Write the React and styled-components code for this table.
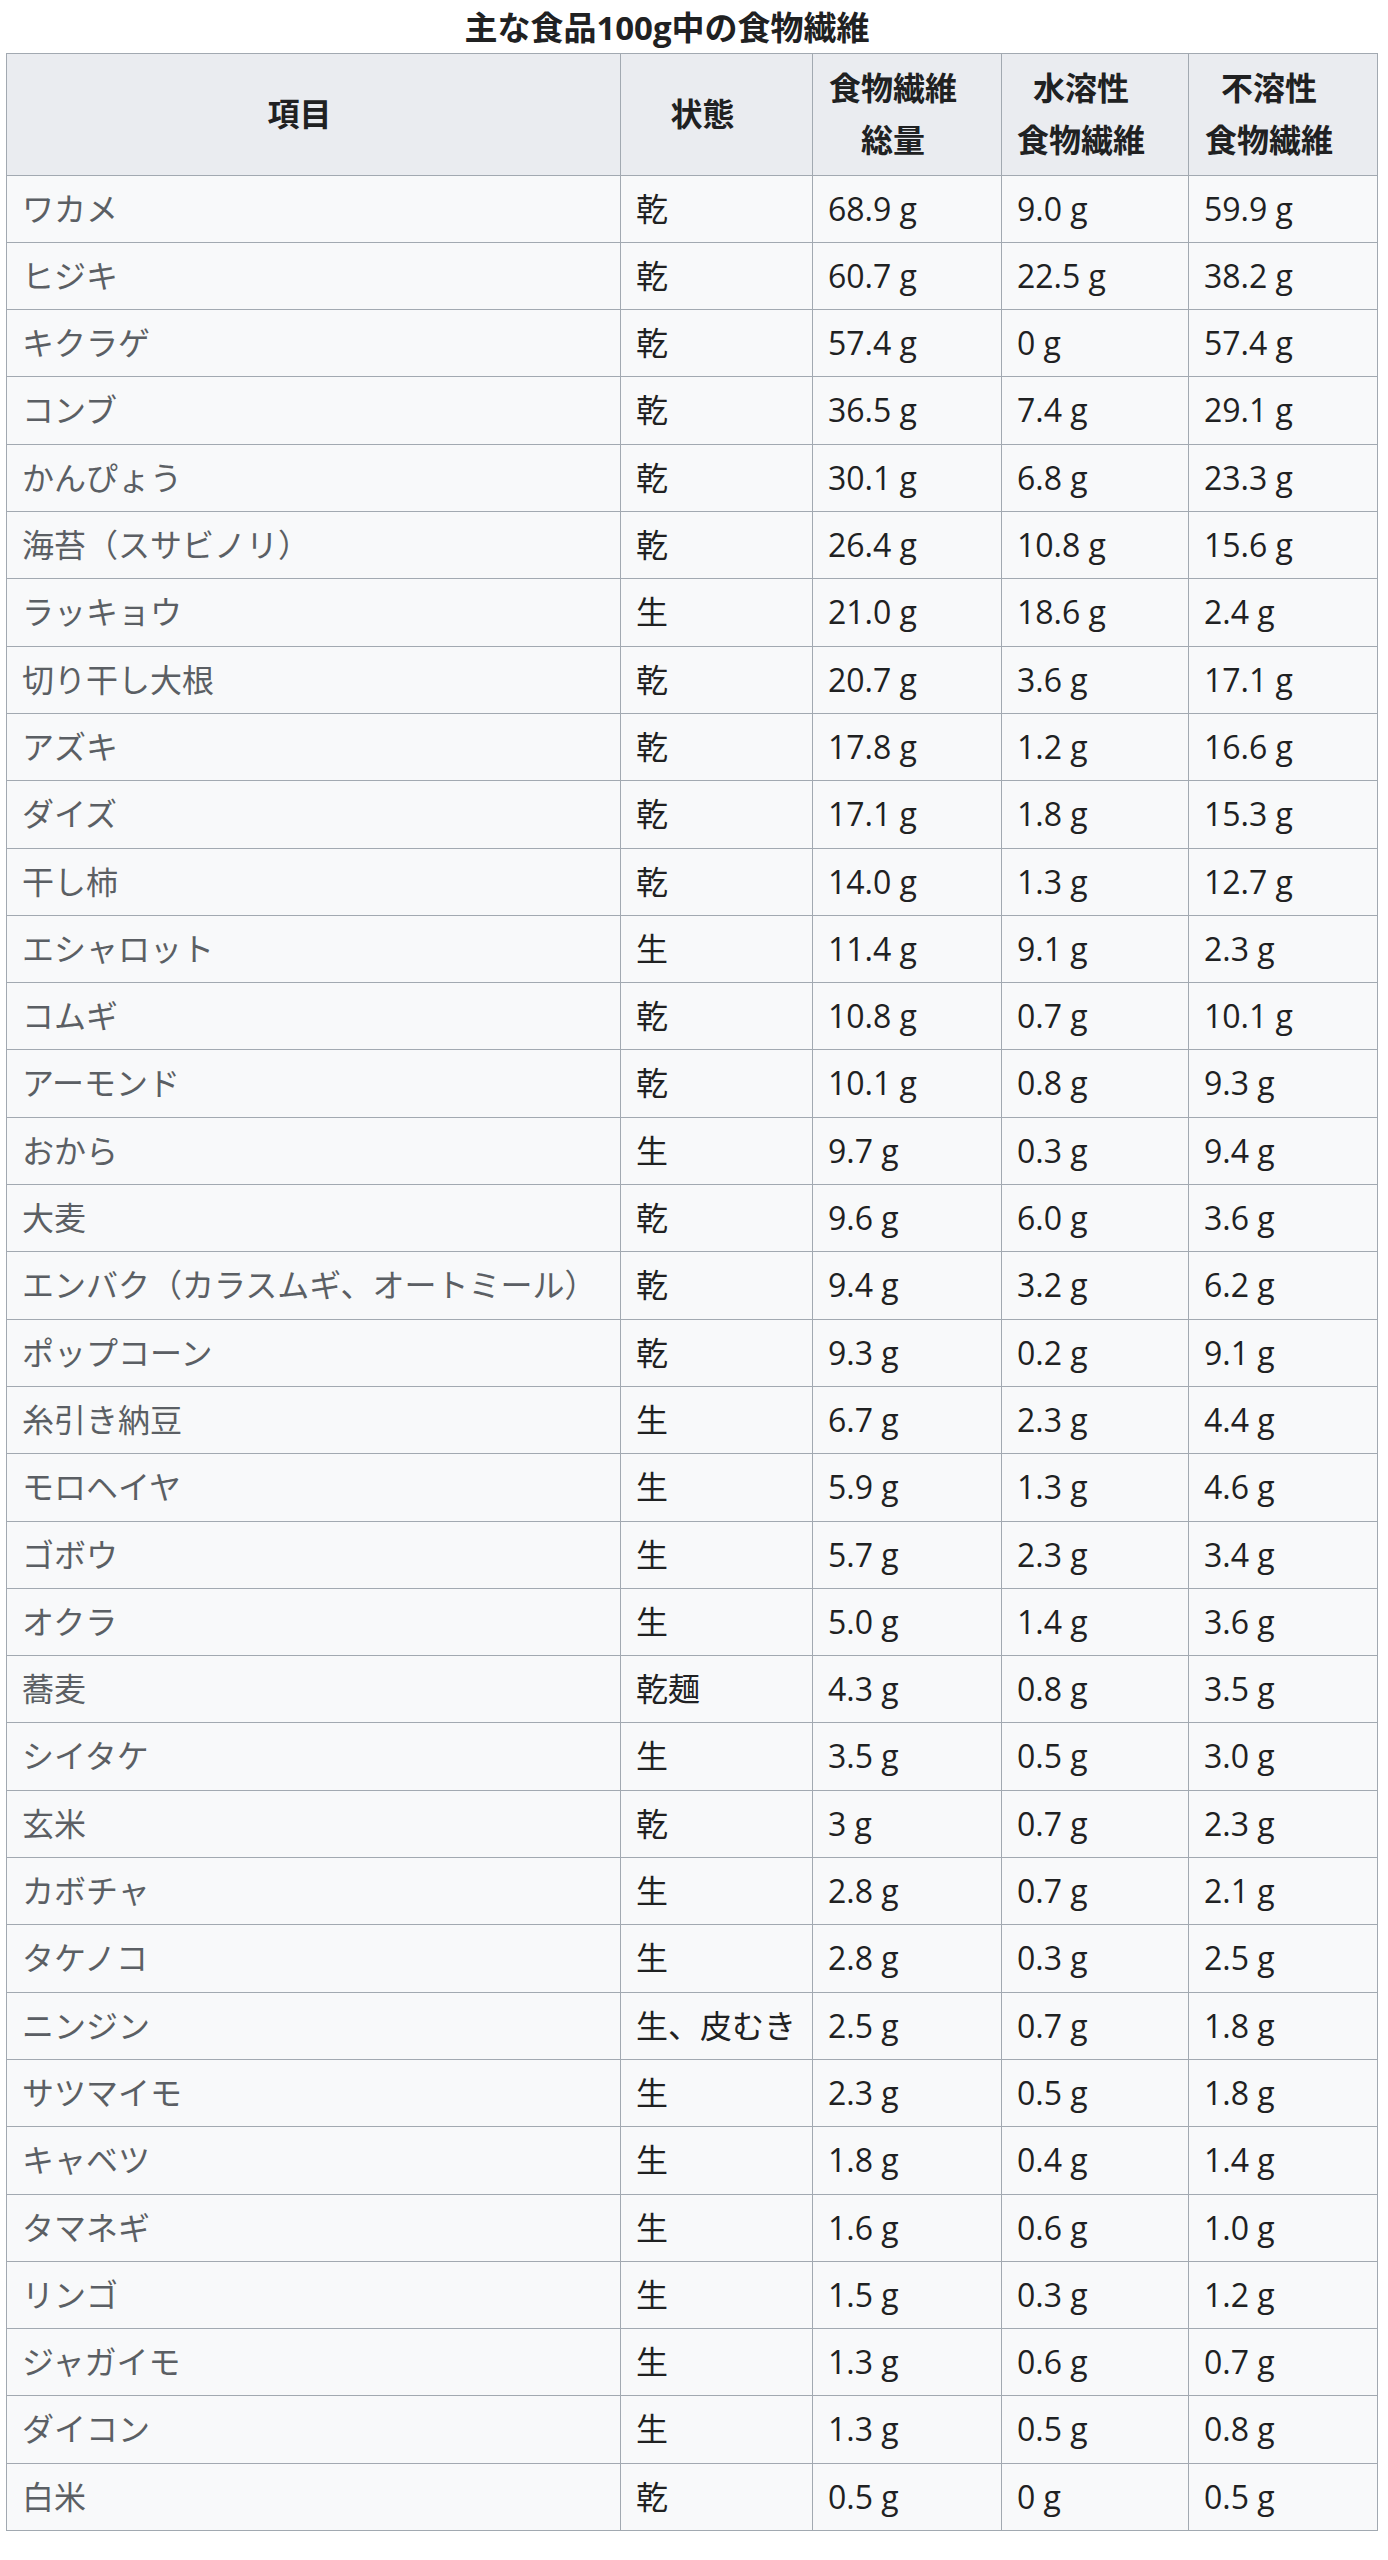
import React from 'react'
import styled, { createGlobalStyle } from 'styled-components'

const GlobalStyle = createGlobalStyle`
  body {
    margin: 0;
    background: #ffffff;
    font-family: "Open Sans", "Noto Sans CJK JP", sans-serif;
    color: #202122;
  }
`

const Page = styled.div`
  padding: 2px 0 0 6px;
`

const Table = styled.table`
  width: 1371px;
  table-layout: fixed;
  border-collapse: collapse;
  background: #f8f9fa;
  border: 1px solid #a2a9b1;
  font-size: 32px;
  line-height: 52.3px;
`

const Caption = styled.caption`
  font-size: 33px;
  font-weight: 700;
  line-height: 51px;
  padding-right: 50px;
  text-align: center;
  color: #202122;
`

const HeadCell = styled.th`
  background: #eaecf0;
  border: 1px solid #a2a9b1;
  padding: 8px 43px 8px 15px;
  font-weight: 700;
  text-align: center;
  vertical-align: middle;
  color: #202122;
`

const Cell = styled.td`
  border: 1px solid #a2a9b1;
  padding: 7px 15px;
  white-space: nowrap;
  overflow: hidden;
  color: ${({ $muted }) => ($muted ? '#5b5f64' : '#202122')};
`

const rows = [
  ['ワカメ', '乾', '68.9', '9.0', '59.9'],
  ['ヒジキ', '乾', '60.7', '22.5', '38.2'],
  ['キクラゲ', '乾', '57.4', '0', '57.4'],
  ['コンブ', '乾', '36.5', '7.4', '29.1'],
  ['かんぴょう', '乾', '30.1', '6.8', '23.3'],
  ['海苔（スサビノリ）', '乾', '26.4', '10.8', '15.6'],
  ['ラッキョウ', '生', '21.0', '18.6', '2.4'],
  ['切り干し大根', '乾', '20.7', '3.6', '17.1'],
  ['アズキ', '乾', '17.8', '1.2', '16.6'],
  ['ダイズ', '乾', '17.1', '1.8', '15.3'],
  ['干し柿', '乾', '14.0', '1.3', '12.7'],
  ['エシャロット', '生', '11.4', '9.1', '2.3'],
  ['コムギ', '乾', '10.8', '0.7', '10.1'],
  ['アーモンド', '乾', '10.1', '0.8', '9.3'],
  ['おから', '生', '9.7', '0.3', '9.4'],
  ['大麦', '乾', '9.6', '6.0', '3.6'],
  ['エンバク（カラスムギ、オートミール）', '乾', '9.4', '3.2', '6.2'],
  ['ポップコーン', '乾', '9.3', '0.2', '9.1'],
  ['糸引き納豆', '生', '6.7', '2.3', '4.4'],
  ['モロヘイヤ', '生', '5.9', '1.3', '4.6'],
  ['ゴボウ', '生', '5.7', '2.3', '3.4'],
  ['オクラ', '生', '5.0', '1.4', '3.6'],
  ['蕎麦', '乾麺', '4.3', '0.8', '3.5'],
  ['シイタケ', '生', '3.5', '0.5', '3.0'],
  ['玄米', '乾', '3', '0.7', '2.3'],
  ['カボチャ', '生', '2.8', '0.7', '2.1'],
  ['タケノコ', '生', '2.8', '0.3', '2.5'],
  ['ニンジン', '生、皮むき', '2.5', '0.7', '1.8'],
  ['サツマイモ', '生', '2.3', '0.5', '1.8'],
  ['キャベツ', '生', '1.8', '0.4', '1.4'],
  ['タマネギ', '生', '1.6', '0.6', '1.0'],
  ['リンゴ', '生', '1.5', '0.3', '1.2'],
  ['ジャガイモ', '生', '1.3', '0.6', '0.7'],
  ['ダイコン', '生', '1.3', '0.5', '0.8'],
  ['白米', '乾', '0.5', '0', '0.5'],
]

const widths = [614, 192, 189, 187, 189]

export default function App() {
  return (
    <>
      <GlobalStyle />
      <Page>
        <Table>
          <Caption>主な食品100g中の食物繊維</Caption>
          <colgroup>
            {widths.map((w, i) => (
              <col key={i} style={{ width: w }} />
            ))}
          </colgroup>
          <thead>
            <tr>
              <HeadCell>項目</HeadCell>
              <HeadCell>状態</HeadCell>
              <HeadCell>食物繊維<br />総量</HeadCell>
              <HeadCell>水溶性<br />食物繊維</HeadCell>
              <HeadCell>不溶性<br />食物繊維</HeadCell>
            </tr>
          </thead>
          <tbody>
            {rows.map(([name, state, total, soluble, insoluble]) => (
              <tr key={name}>
                <Cell $muted>{name}</Cell>
                <Cell>{state}</Cell>
                <Cell>{total} g</Cell>
                <Cell>{soluble} g</Cell>
                <Cell>{insoluble} g</Cell>
              </tr>
            ))}
          </tbody>
        </Table>
      </Page>
    </>
  )
}
